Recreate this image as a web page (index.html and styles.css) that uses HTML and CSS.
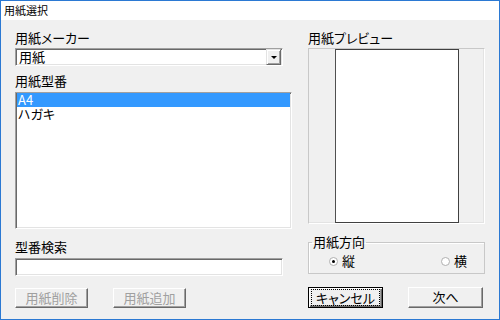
FILE: index.html
```html
<!DOCTYPE html>
<html lang="ja">
<head>
  <meta charset="UTF-8">
  <title>用紙選択</title>
  <link rel="stylesheet" href="styles.css">
</head>
<body>
  <div class="window">
    <div class="titlebar">用紙選択</div>
    <div class="client">
      <div class="col-left">
        <div class="label">用紙メーカー</div>
        <div class="combo">
          <span class="combo-text">用紙</span>
          <span class="combo-btn"><span class="arrow"></span></span>
        </div>
        <div class="label label-gap">用紙型番</div>
        <div class="listbox">
          <div class="row selected">A4</div>
          <div class="row">ハガキ</div>
        </div>
        <div class="label label-gap2">型番検索</div>
        <div class="textbox"></div>
        <div class="btn-row">
          <div class="btn disabled">用紙削除</div>
          <div class="btn disabled">用紙追加</div>
        </div>
      </div>
      <div class="col-right">
        <div class="label">用紙プレビュー</div>
        <div class="preview">
          <div class="page"></div>
        </div>
        <fieldset class="group">
          <legend>用紙方向</legend>
          <div class="radios">
            <span class="radio-item"><span class="radio checked"></span>縦</span>
            <span class="radio-item"><span class="radio"></span>横</span>
          </div>
        </fieldset>
        <div class="btn-row btn-row-right">
          <div class="btn default"><span class="focus">キャンセル</span></div>
          <div class="btn">次へ</div>
        </div>
      </div>
    </div>
  </div>
</body>
</html>
```

FILE: styles.css
```css
body {
  margin: 0;
  font-family: "Noto Sans CJK JP", sans-serif;
  font-feature-settings: "palt";
  color: #000;
}
.window {
  width: 500px;
  height: 320px;
  box-sizing: border-box;
  border: 1px solid #2b79d3;
  display: flex;
  flex-direction: column;
  background: #f0f0f0;
}
.titlebar {
  height: 19px;
  line-height: 19px;
  background: #fff;
  font-size: 11px;
  padding-left: 3px;
}
.client {
  flex: 1;
  display: grid;
  grid-template-columns: 277px 177px;
  column-gap: 16px;
  padding: 10px 0 0 14px;
}
.label {
  font-size: 13px;
  line-height: 16px;
  height: 16px;
}
.label-gap {
  margin-top: 7px;
}
.label-gap2 {
  margin-top: 10px;
}
.combo {
  margin-top: 2px;
  width: 268px;
  height: 18px;
  box-sizing: border-box;
  background: #fff;
  border: 1px solid;
  border-color: #a0a0a0 #fff #fff #a0a0a0;
  box-shadow: inset 1px 1px 0 #696969, inset -1px -1px 0 #e3e3e3;
  display: flex;
  align-items: center;
  justify-content: space-between;
  padding: 0 1px 0 3px;
}
.combo-text {
  font-size: 13px;
  line-height: 14px;
}
.combo-btn {
  width: 15px;
  height: 16px;
  box-sizing: border-box;
  background: #f0f0f0;
  border: 1px solid;
  border-color: #e3e3e3 #696969 #696969 #e3e3e3;
  box-shadow: inset 1px 1px 0 #fff, inset -1px -1px 0 #a0a0a0;
  display: flex;
  align-items: center;
  justify-content: center;
}
.arrow {
  width: 0;
  height: 0;
  border-left: 3px solid transparent;
  border-right: 3px solid transparent;
  border-top: 3px solid #000;
}
.listbox {
  margin-top: 3px;
  height: 137px;
  box-sizing: border-box;
  background: #fff;
  border: 1px solid;
  border-color: #a0a0a0 #fff #fff #a0a0a0;
  box-shadow: inset 1px 1px 0 #696969, inset -1px -1px 0 #e3e3e3;
  padding: 0 1px 0 1px;
}
.row {
  font-size: 13px;
  line-height: 14px;
  height: 14px;
  padding-left: 1px;
}
.row.selected {
  background: #3399ff;
  color: #fff;
}
.textbox {
  margin-top: 3px;
  width: 268px;
  height: 18px;
  box-sizing: border-box;
  background: #fff;
  border: 1px solid;
  border-color: #a0a0a0 #fff #fff #a0a0a0;
  box-shadow: inset 1px 1px 0 #696969, inset -1px -1px 0 #e3e3e3;
}
.btn-row {
  margin-top: 12px;
  display: flex;
  gap: 25px;
}
.btn {
  width: 73px;
  height: 20px;
  box-sizing: border-box;
  font-size: 13px;
  line-height: 17px;
  text-align: center;
  border: 1px solid;
  border-color: #fff #696969 #696969 #fff;
  box-shadow: inset -1px -1px 0 #a0a0a0;
  background: #f0f0f0;
}
.btn.disabled {
  color: #a0a0a0;
}
.btn-row-right {
  margin-top: 13px;
}
.btn-row-right .btn {
  width: 75px;
  height: 21px;
  line-height: 18px;
}
.btn.default {
  border: 1px solid #000;
  box-shadow: inset 1px 1px 0 #fff, inset -1px -1px 0 #696969, inset -2px -2px 0 #a0a0a0;
  padding: 2px 3px;
  line-height: 15px;
}
.focus {
  display: block;
  outline: 1px dotted #000;
  outline-offset: 0;
}
.preview {
  margin-top: 2px;
  height: 176px;
  box-sizing: border-box;
  border: 1px solid;
  border-color: #c8c8c8 #fff #fff #c8c8c8;
  box-shadow: inset -1px -1px 0 #e3e3e3;
  display: flex;
  justify-content: center;
}
.page {
  width: 124px;
  box-sizing: border-box;
  background: #fff;
  border: 1px solid #404040;
  border-left-color: #505050;
}
.group {
  margin: 11px 0 0 0;
  padding: 0 0 5px 3px;
  border: 1px solid #c8c8c8;
  box-shadow: 1px 1px 0 #fff inset;
  min-width: 0;
}
.group legend {
  font-size: 13px;
  line-height: 14px;
  padding: 0 1px;
}
.radios {
  display: flex;
  justify-content: space-between;
  padding: 5px 17px 0 17px;
  font-size: 13px;
  line-height: 14px;
}
.radio-item {
  display: flex;
  align-items: center;
  gap: 4px;
}
.radio {
  width: 9px;
  height: 9px;
  box-sizing: border-box;
  border: 1px solid #b0b0b0;
  border-radius: 50%;
  background: #fff;
  display: flex;
  align-items: center;
  justify-content: center;
}
.radio.checked::after {
  content: "";
  width: 3px;
  height: 3px;
  border-radius: 50%;
  background: #000;
}
```
